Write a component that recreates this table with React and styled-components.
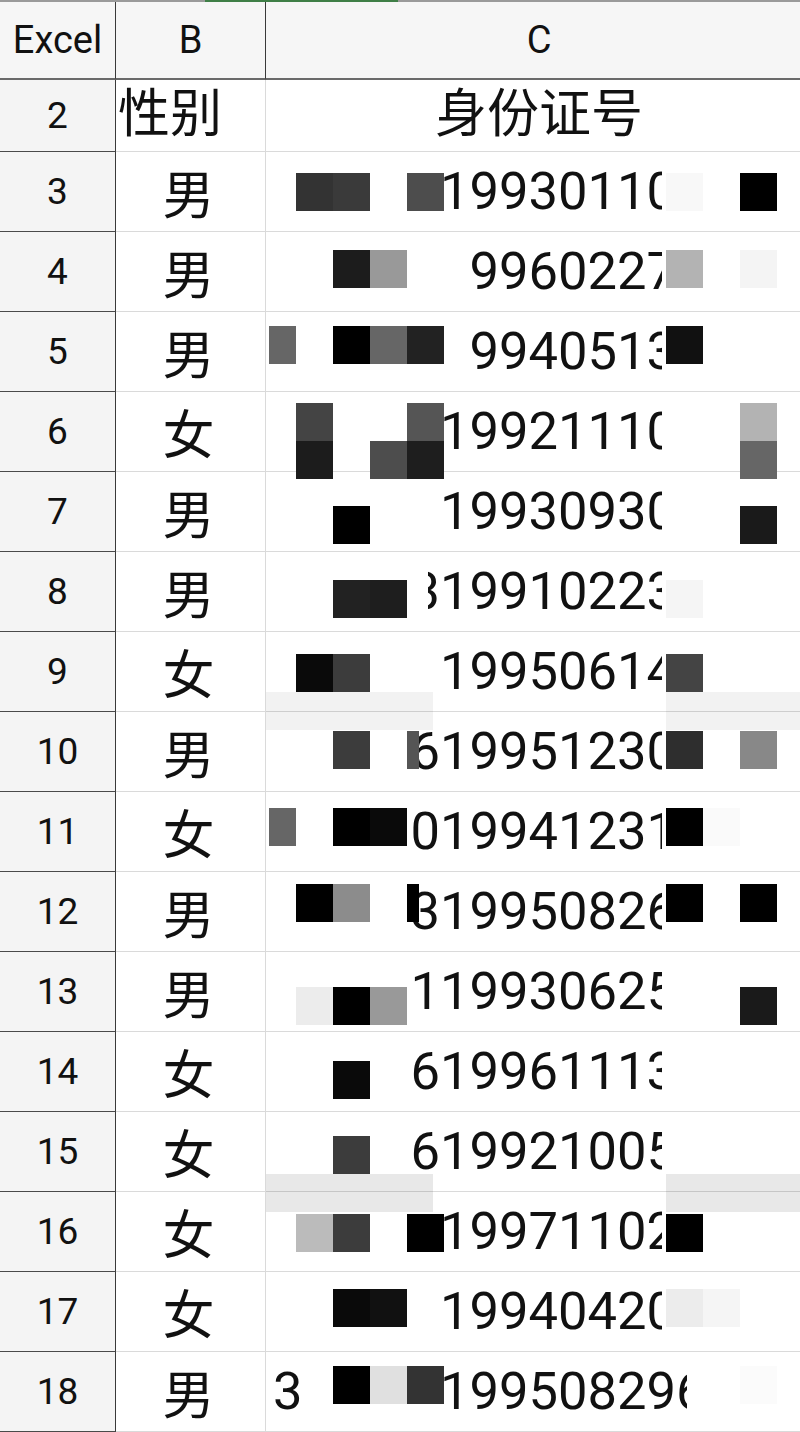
import React from 'react'
import styled, { createGlobalStyle } from 'styled-components'

const GlobalStyle = createGlobalStyle`
  html, body {
    margin: 0;
    padding: 0;
    background: #fff;
  }
  body {
    width: 800px;
    height: 1432px;
    overflow: hidden;
  }
`

const Sheet = styled.div`
  width: 800px;
  height: 1432px;
  overflow: hidden;
  background: #fff;
  color: #111;
  font-family: Roboto, "Noto Sans CJK SC", sans-serif;
`

const TopRule = styled.div`
  display: flex;
  height: 2px;
  background: #9a9a9a;
`

const GreenMark = styled.div`
  margin-left: 205px;
  width: 193px;
  background: #3f7f47;
`

const Grid = styled.div`
  display: grid;
  grid-template-columns: 116px 150px 546px;
`

const HeadCell = styled.div`
  box-sizing: border-box;
  height: 78px;
  display: flex;
  align-items: center;
  justify-content: center;
  background: #f6f6f6;
  border-bottom: 2px solid #6a6a6a;
  border-right: ${p => (p.$last ? 'none' : '1.5px solid #3a3a3a')};
  font-size: 38px;
  line-height: 1;
`

const RowHead = styled.div`
  box-sizing: border-box;
  height: ${p => p.$h}px;
  display: flex;
  align-items: center;
  justify-content: center;
  background: #f4f4f4;
  border-right: 1.5px solid #3a3a3a;
  border-bottom: 1.5px solid #4a4a4a;
  font-size: 37px;
  line-height: 1;
`

const GenderCell = styled.div`
  box-sizing: border-box;
  height: ${p => p.$h}px;
  display: flex;
  align-items: center;
  justify-content: ${p => (p.$left ? 'flex-start' : 'center')};
  padding: ${p => (p.$left ? '0 0 12px 2px' : '0 4px 0 0')};
  border-right: 1.5px solid #dadada;
  border-bottom: 1.5px solid #dadada;
  font-family: "Noto Sans CJK SC", sans-serif;
  font-size: 52px;
  line-height: 1;
  white-space: nowrap;
`

const TitleCell = styled.div`
  box-sizing: border-box;
  height: ${p => p.$h}px;
  display: flex;
  align-items: center;
  justify-content: center;
  padding-bottom: 12px;
  border-bottom: 1.5px solid #dadada;
  font-family: "Noto Sans CJK SC", sans-serif;
  font-size: 52px;
  line-height: 1;
`

const IdCell = styled.div`
  position: relative;
  box-sizing: border-box;
  height: ${p => p.$h}px;
  display: flex;
  align-items: center;
  border-bottom: 1.5px solid #dadada;
  font-size: 52.5px;
  line-height: 1;
`

const Lead = styled.div`
  flex: none;
  width: ${p => p.$w}px;
  display: flex;
  align-items: center;
`

const LeadDigit = styled.span`
  padding-left: 7px;
`

const Window = styled.div`
  flex: none;
  width: ${p => p.$w}px;
  overflow: hidden;
  white-space: nowrap;
`

const Digits = styled.span`
  display: inline-block;
  margin-left: ${p => p.$shift}px;
`

// censor blocks laid over the id column, on a 37px mosaic grid
const Mosaic = styled.div`
  position: absolute;
  z-index: 1;
  left: -7px;
  top: ${p => p.$top}px;
  display: grid;
  grid-template-columns: repeat(15, 37px);
  grid-auto-rows: 38px;
  pointer-events: none;
`

const Block = styled.div`
  grid-column: ${p => p.$col + 1};
  grid-row: ${p => p.$row + 1};
  justify-self: ${p => (p.$end ? 'end' : 'start')};
  width: ${p => (p.$w ? `${p.$w}px` : '100%')};
  background: ${p => p.$c};
`

const C_START = 266
const DIGIT = 29.5

const band = c => [[0, c, 30, 1], [1, c], [2, c], [3, c], [4, c, 26], [11, c], [12, c], [13, c], [14, c]]

const rows = [
  { n: 3, g: '男', d: '19930110', s: 7, top: 21, m: [[[1, '#333'], [2, '#3a3a3a'], [4, '#4d4d4d'], [11, '#f8f8f8'], [13, '#000']]] },
  { n: 4, g: '男', d: '9960227', s: 8, top: 18, m: [[[2, '#1c1c1c'], [3, '#999'], [11, '#b3b3b3'], [13, '#f4f4f4']]] },
  { n: 5, g: '男', d: '9940513', s: 8, top: 14, m: [[[0, '#666', 27, 1], [2, '#000'], [3, '#666'], [4, '#222'], [11, '#111']]] },
  {
    n: 6, g: '女', d: '19921110', s: 7, top: 11,
    m: [
      [[1, '#444'], [4, '#555'], [13, '#b3b3b3']],
      [[1, '#1c1c1c'], [3, '#4d4d4d'], [4, '#1e1e1e'], [13, '#666']],
    ],
  },
  { n: 7, g: '男', d: '19930930', s: 7, top: 34, m: [[[2, '#000'], [13, '#1a1a1a']]] },
  { n: 8, g: '男', d: '319910223', s: 6, clipL: 428, top: 28, m: [[[2, '#222'], [3, '#1e1e1e'], [11, '#f5f5f5']]] },
  {
    n: 9, g: '女', d: '19950614', s: 7, top: 22,
    m: [[[1, '#0a0a0a'], [2, '#3c3c3c'], [11, '#444']], band('rgba(0,0,0,0.05)')],
  },
  { n: 10, g: '男', d: '619951230', s: 6, clipL: 412, top: 19, m: [[[2, '#3c3c3c'], [4, '#555', 12], [11, '#2e2e2e'], [13, '#888']]] },
  { n: 11, g: '女', d: '019941231', s: 6, clipL: 412, top: 16, m: [[[0, '#666', 27, 1], [2, '#000'], [3, '#0a0a0a'], [11, '#000'], [12, '#fafafa']]] },
  { n: 12, g: '男', d: '319950826', s: 6, clipL: 412, top: 12, m: [[[1, '#000'], [2, '#8c8c8c'], [4, '#000', 12], [11, '#000'], [13, '#000']]] },
  { n: 13, g: '男', d: '119930625', s: 6, clipL: 412, top: 35, m: [[[1, '#ececec'], [2, '#000'], [3, '#999'], [13, '#1a1a1a']]] },
  { n: 14, g: '女', d: '619961113', s: 6, clipL: 412, top: 29, m: [[[2, '#0a0a0a']]] },
  {
    n: 15, g: '女', d: '619921005', s: 6, clipL: 412, top: 24,
    m: [[[2, '#3c3c3c']], band('rgba(0,0,0,0.09)')],
  },
  { n: 16, g: '女', d: '19971102', s: 7, top: 22, m: [[[1, '#bbb'], [2, '#3c3c3c'], [4, '#000'], [11, '#000']]] },
  { n: 17, g: '女', d: '19940420', s: 7, top: 17, m: [[[2, '#0a0a0a'], [3, '#111'], [11, '#ececec'], [12, '#f5f5f5']]] },
  { n: 18, g: '男', d: '199508296', s: 7, clipR: 687, head: '3', top: 14, m: [[[2, '#000'], [3, '#e0e0e0'], [4, '#333'], [13, '#fbfbfb']]] },
]

function IdNumber({ row }) {
  const clipL = row.clipL || 438
  const clipR = row.clipR || 662
  const shift = 440 + DIGIT * (row.s - 7) - clipL
  return (
    <IdCell $h={80}>
      <Lead $w={clipL - C_START}>{row.head && <LeadDigit>{row.head}</LeadDigit>}</Lead>
      <Window $w={clipR - clipL}>
        <Digits $shift={shift}>{row.d}</Digits>
      </Window>
      <Mosaic $top={row.top}>
        {row.m.map((line, r) =>
          line.map(([col, c, w, end]) => (
            <Block key={`${r}-${col}`} $row={r} $col={col} $c={c} $w={w} $end={end} />
          ))
        )}
      </Mosaic>
    </IdCell>
  )
}

export default function App() {
  return (
    <Sheet>
      <GlobalStyle />
      <TopRule>
        <GreenMark />
      </TopRule>
      <Grid>
        <HeadCell>Excel</HeadCell>
        <HeadCell>B</HeadCell>
        <HeadCell $last>C</HeadCell>

        <RowHead $h={72}>2</RowHead>
        <GenderCell $h={72} $left>性别</GenderCell>
        <TitleCell $h={72}>身份证号</TitleCell>

        {rows.map(row => (
          <React.Fragment key={row.n}>
            <RowHead $h={80}>{row.n}</RowHead>
            <GenderCell $h={80}>{row.g}</GenderCell>
            <IdNumber row={row} />
          </React.Fragment>
        ))}
      </Grid>
    </Sheet>
  )
}
